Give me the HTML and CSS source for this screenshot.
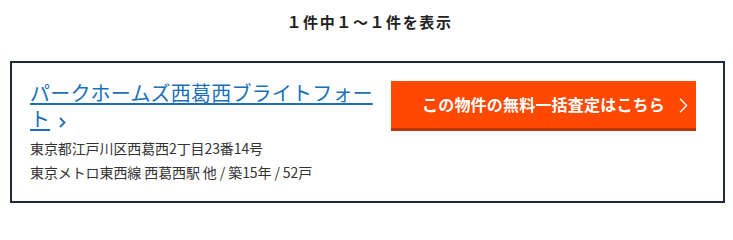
FILE: index.html
```html
<!DOCTYPE html>
<html lang="ja">
<head>
<meta charset="utf-8">
<title>検索結果</title>
<link rel="stylesheet" href="styles.css">
</head>
<body>
<main class="page">
  <p class="count">１件中１～１件を表示</p>
  <section class="card">
    <div class="info">
      <h2 class="title"><a href="#" class="title-link">パークホームズ西葛西ブライトフォート</a><svg class="title-arrow" viewBox="0 0 7 11" width="7" height="11"><polyline points="1,1 5.5,5.5 1,10" fill="none" stroke="#1a6fb8" stroke-width="1.8"/></svg></h2>
      <p class="meta">東京都江戸川区西葛西2丁目23番14号</p>
      <p class="meta">東京メトロ東西線 西葛西駅 他 / 築15年 / 52戸</p>
    </div>
    <a href="#" class="cta">この物件の無料一括査定はこちら<svg class="cta-arrow" viewBox="0 0 9 15" width="9" height="15"><polyline points="1,0.8 7.6,7.5 1,14.2" fill="none" stroke="#ffffff" stroke-width="1.3"/></svg></a>
  </section>
</main>
</body>
</html>
```

FILE: styles.css
```css
* { box-sizing: border-box; }
html, body { margin: 0; padding: 0; background: #ffffff; }
body {
  font-family: "Noto Sans CJK JP", "Noto Sans", sans-serif;
  color: #333333;
}
.page { padding: 11px 8px 0 10px; }
.count {
  margin: 0;
  text-align: center;
  font-size: 15px;
  line-height: 22px;
  font-weight: 700;
  letter-spacing: 1.6px;
  color: #222222;
  padding-left: 4px;
}
.card {
  margin-top: 28px;
  width: 715px;
  height: 142px;
  border: 2px solid #1f2a3a;
  display: flex;
  align-items: flex-start;
  gap: 16px;
  padding: 17px 27px 15px 18px;
}
.info { flex: 1; min-width: 0; }
.title {
  margin: 0;
  font-size: 20px;
  line-height: 26px;
  font-weight: 400;
  letter-spacing: 0.2px;
  width: 355px;
}
.title-link {
  color: #1a6fb8;
  text-decoration: underline;
  text-underline-offset: 2px;
  text-decoration-thickness: 1.5px;
}
.title-arrow { margin-left: 9px; vertical-align: -1px; }
.meta {
  margin: 0;
  font-size: 14px;
  line-height: 24px;
  color: #333333;
  letter-spacing: -0.1px;
}
.title + .meta { margin-top: 4px; }
.cta {
  position: relative;
  flex: 0 0 305px;
  height: 50px;
  margin-top: 1px;
  background: #ff4800;
  border-bottom: 3px solid #b8360c;
  color: #ffffff;
  font-size: 16px;
  font-weight: 700;
  text-decoration: none;
  display: flex;
  align-items: center;
  justify-content: center;
  padding-bottom: 1px;
  letter-spacing: 0.2px;
}
.cta-arrow {
  position: absolute;
  right: 8px;
  top: 17px;
}
```
